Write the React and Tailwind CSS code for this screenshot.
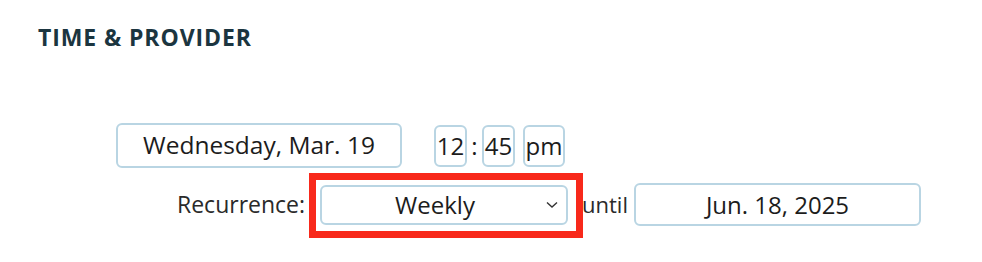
import React from "react";

const box = "border-2 border-[#b9d5e3] rounded-[6px] bg-white flex items-center justify-center text-[#1c1c1c]";

export default function App() {
  return (
    <div className="w-[982px] h-[262px] bg-white overflow-hidden" style={{ fontFamily: '"Open Sans", "Noto Sans", sans-serif' }}>
      <div className="pt-[21px] pl-[38px] text-[23px] font-bold tracking-[0.9px] text-[#1b3540] leading-[32px]">
        TIME &amp; PROVIDER
      </div>
      <div className="mt-[70px] pl-[116px] flex items-center h-[45px]">
        <div className={`${box} w-[286px] h-[45px] text-[24.5px]`}>Wednesday, Mar. 19</div>
        <div className={`${box} ml-[32px] w-[33px] h-[42px] text-[24px]`}>12</div>
        <span className="w-[15px] text-center text-[24px] text-[#1c1c1c]">:</span>
        <div className={`${box} w-[33px] h-[42px] text-[24px]`}>45</div>
        <div className={`${box} ml-[8px] w-[42px] h-[42px] text-[24px]`}>pm</div>
      </div>
      <div className="mt-[15px] pl-[177px] flex items-center h-[43px]">
        <span className="text-[23px] text-[#2a2a2a] w-[143px] whitespace-nowrap">Recurrence:</span>
        <div className="relative">
          <div className={`${box} w-[248px] h-[40px] text-[24px] relative pr-[18px]`}>
            Weekly
            <svg className="absolute right-[8px] top-[14px]" width="12" height="8" viewBox="0 0 12 8" fill="none">
              <path d="M1 1.5 L6 6 L11 1.5" stroke="#333" strokeWidth="1.4" />
            </svg>
          </div>
          <div className="absolute left-[-11px] right-[-15px] top-[-12px] bottom-[-13px] border-[7px] border-[#f8291b] pointer-events-none" />
        </div>
        <span className="ml-[14px] text-[22px] text-[#2a2a2a] w-[52px]">until</span>
        <div className={`${box} w-[287px] h-[43px] text-[24px]`}>Jun. 18, 2025</div>
      </div>
    </div>
  );
}
